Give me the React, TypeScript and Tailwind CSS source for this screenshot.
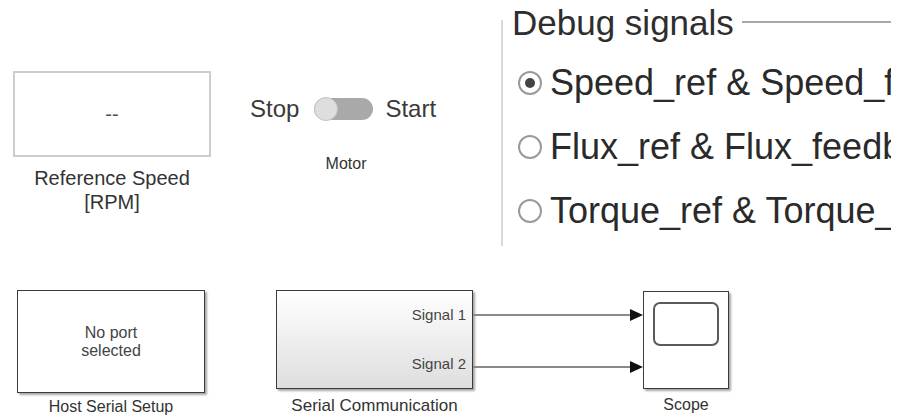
import React from 'react'

function Radio({ checked, label }: { checked?: boolean; label: string }) {
  return (
    <div className="flex items-center h-[64px] whitespace-nowrap">
      <span className="w-[24px] h-[24px] rounded-full border-2 border-[#9a9a9a] flex items-center justify-center shrink-0">
        {checked && <span className="w-[10px] h-[10px] rounded-full bg-[#444]" />}
      </span>
      <span className="ml-[8px] text-[36px] leading-none text-[#2a2a2a]">{label}</span>
    </div>
  )
}

export default function App() {
  return (
    <div className="relative w-[903px] h-[417px] bg-white overflow-hidden text-[#333] font-['Liberation_Sans',Arial,sans-serif]">
      {/* Reference speed display */}
      <div className="absolute left-[13px] top-[71px] w-[198px] flex flex-col items-center">
        <div className="w-full h-[86px] border-2 border-[#cdcdcd] flex items-center justify-center text-[20px] text-[#555]">
          --
        </div>
        <div className="mt-[9px] text-[20px] leading-[24px] text-center text-[#333]">
          Reference Speed
          <br />
          [RPM]
        </div>
      </div>

      {/* Motor toggle */}
      <div className="absolute left-[250px] top-[96px] flex flex-col items-center">
        <div className="flex items-center h-[26px] text-[24px] text-[#3a3a3a]">
          <span>Stop</span>
          <span className="relative ml-[15px] mr-[12px] w-[59px] h-[22px] rounded-full bg-[#a9a9a9]">
            <span className="absolute left-0 top-[-1px] w-[24px] h-[24px] rounded-full bg-[#dedede] border border-[#c4c4c4]" />
          </span>
          <span>Start</span>
        </div>
        <div className="mt-[30px] ml-[6px] text-[16px] text-[#333]">Motor</div>
      </div>

      {/* Debug signals panel */}
      <div className="absolute left-[501px] top-0 w-[390px] h-[246px] overflow-hidden">
        <div className="absolute left-0 top-[20px] bottom-0 w-[2px] bg-[#d9d9d9]" />
        <div className="flex items-center ml-[11px] mt-[3px] h-[38px]">
          <span className="text-[35px] leading-none text-[#2e2e2e] whitespace-nowrap">Debug signals</span>
          <span className="ml-[8px] flex-1 h-[2px] bg-[#a8a8a8]" />
        </div>
        <div className="ml-[17px] mt-[10px] flex flex-col">
          <Radio checked label="Speed_ref & Speed_feedback" />
          <Radio label="Flux_ref & Flux_feedback" />
          <Radio label="Torque_ref & Torque_feedback" />
        </div>
      </div>

      {/* Host Serial Setup */}
      <div className="absolute left-[17px] top-[290px] w-[188px] flex flex-col items-center">
        <div className="w-full h-[103px] border-[1.5px] border-[#3c3c3c] shadow-[2px_2px_2px_rgba(0,0,0,0.35)] flex items-center justify-center text-center text-[16px] leading-[18px] text-[#444]">
          No port
          <br />
          selected
        </div>
        <div className="mt-[5px] text-[16px] leading-[18px] text-[#333]">Host Serial Setup</div>
      </div>

      {/* Serial Communication */}
      <div className="absolute left-[276px] top-[290px] w-[197px] flex flex-col items-center">
        <div className="w-full h-[99px] border-[1.5px] border-[#3c3c3c] shadow-[2px_2px_2px_rgba(0,0,0,0.35)] bg-gradient-to-b from-white to-[#dedede] flex flex-col items-end justify-around pr-[6px] text-[15px] text-[#444]">
          <span>Signal 1</span>
          <span>Signal 2</span>
        </div>
        <div className="mt-[7px] text-[17px] leading-[19px] text-[#333]">Serial Communication</div>
      </div>

      {/* Signal lines */}
      <svg className="absolute left-[473px] top-[300px]" width="172" height="80" viewBox="0 0 172 80">
        <line x1="0" y1="15" x2="158" y2="15" stroke="#8a8a8a" strokeWidth="2" />
        <polygon points="157,9 170,15 157,21" fill="#111" />
        <line x1="0" y1="67" x2="158" y2="67" stroke="#8a8a8a" strokeWidth="2" />
        <polygon points="157,61 170,67 157,73" fill="#111" />
      </svg>

      {/* Scope */}
      <div className="absolute left-[643px] top-[291px] w-[86px] flex flex-col items-center">
        <div className="w-full h-[98px] border-[1.5px] border-[#3c3c3c] shadow-[2px_2px_2px_rgba(0,0,0,0.35)] bg-white pt-[10px] px-[9px]">
          <div className="h-[44px] rounded-[7px] border-2 border-[#5a5a5a]" />
        </div>
        <div className="mt-[7px] text-[16px] leading-[18px] text-[#333]">Scope</div>
      </div>
    </div>
  )
}
